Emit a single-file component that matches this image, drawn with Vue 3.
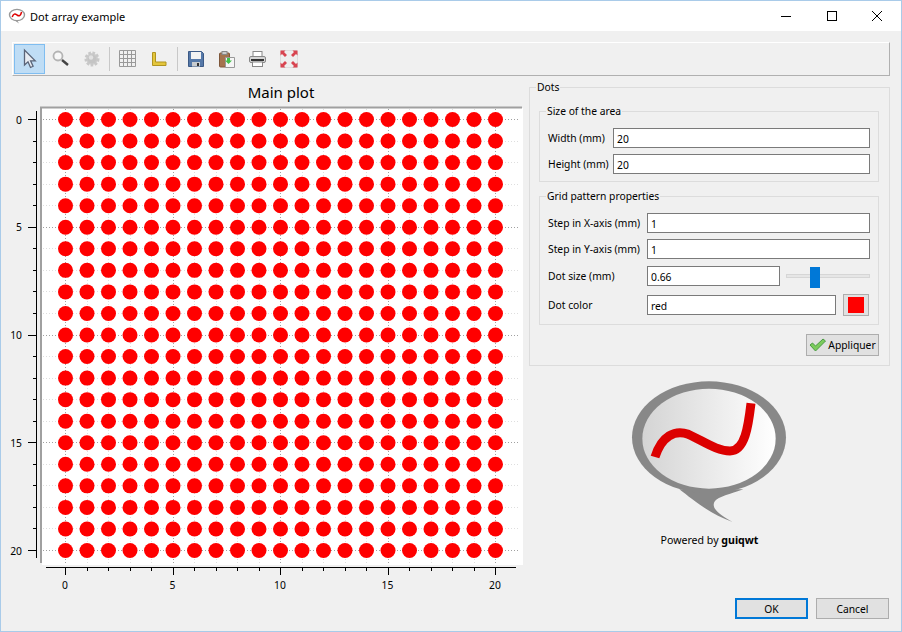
<script setup>
const steps = Array.from({ length: 21 }, (_, i) => i)
const xOf = i => 65.5 + 21.5 * i
const yOf = i => 119.5 + 21.55 * i
const majors = steps.filter(i => i % 5 === 0)
</script>

<template>
  <div class="window">
    <div class="titlebar">
      <svg class="app-icon" width="18" height="16" viewBox="0 0 18 16">
        <ellipse cx="9" cy="7" rx="7.5" ry="5.6" fill="#fff" stroke="#999" stroke-width="1.4" />
        <path d="M6 12l5 3.5-2-3.5z" fill="#999" />
        <path d="M4.2 9C5.5 5.500 7 5.500 9 7c2 1.300 3.500 1.200 4.600-3" fill="none" stroke="#d00" stroke-width="1.5" />
      </svg>
      <span class="title">Dot array example</span>
      <div class="winbtns">
        <span class="winbtn"><svg width="12" height="12"><path d="M1 6.5h10" stroke="#000" /></svg></span>
        <span class="winbtn"><svg width="12" height="12"><rect x="1.5" y="1.5" width="9" height="9" fill="none" stroke="#000" /></svg></span>
        <span class="winbtn"><svg width="12" height="12"><path d="M1 1l10 10M11 1L1 11" stroke="#000" /></svg></span>
      </div>
    </div>

    <div class="content">
      <div class="toolbar">
        <span class="tool active">
          <svg width="20" height="22" viewBox="0 0 20 22">
            <path d="M4.500 2v15l3.500-3.200 2.500 5.700 2.600-1.200-2.500-5.500h4.600z" fill="#e8ecf2" stroke="#5a6478" stroke-width="1.300" />
          </svg>
        </span>
        <span class="tool">
          <svg width="20" height="20" viewBox="0 0 20 20">
            <circle cx="7" cy="7" r="4.500" fill="#f8f8f8" stroke="#b4b4b4" stroke-width="1.800" />
            <path d="M11 11l6 5" stroke="#444" stroke-width="2.400" />
          </svg>
        </span>
        <span class="tool">
          <svg width="20" height="20" viewBox="0 0 20 20">
            <circle cx="10" cy="10" r="6" fill="#cfcfcf" stroke="#c8c8c8" stroke-width="3" stroke-dasharray="2.500 1.500" />
            <circle cx="10" cy="10" r="4.500" fill="#c4c4c4" />
            <circle cx="9" cy="8.500" r="2.200" fill="#e2e2e2" />
          </svg>
        </span>
        <span class="sep"></span>
        <span class="tool">
          <svg width="18" height="18" viewBox="0 0 18 18">
            <path d="M.5.500h16v16H.5zM4.500.500v16M8.500.500v16M12.500.500v16M.5 4.500h16M.5 8.500h16M.5 12.500h16" fill="none" stroke="#999" />
          </svg>
        </span>
        <span class="tool">
          <svg width="16" height="16" viewBox="0 0 16 16">
            <path d="M1.500 1.500h3v9.500h10.500v3.500H1.500z" fill="#e4c63c" stroke="#b09420" />
          </svg>
        </span>
        <span class="sep sep2"></span>
        <span class="tool">
          <svg width="16" height="16" viewBox="0 0 16 16">
            <path d="M.5.500h13l2 2v13H.5z" fill="#5578a8" stroke="#3c5a86" />
            <rect x="3" y="1" width="10" height="7" fill="#f2f2f2" />
            <rect x="4" y="11" width="8" height="4.500" fill="#c8ccd0" />
            <rect x="9" y="12" width="2" height="3" fill="#333" />
          </svg>
        </span>
        <span class="tool">
          <svg width="16" height="17" viewBox="0 0 16 17">
            <rect x=".5" y="2" width="10" height="14" rx="1" fill="#a5734e" stroke="#7e573a" />
            <rect x="3" y=".5" width="5" height="3" fill="#ccc" stroke="#888" />
            <path d="M6.500 6.500h9v10h-9z" fill="#f6f6f6" stroke="#999" />
            <path d="M8 7h3v2.500h2L9.500 13 6 9.500h2z" fill="#44c24a" />
          </svg>
        </span>
        <span class="tool">
          <svg width="17" height="16" viewBox="0 0 17 16">
            <rect x="4" y=".5" width="9" height="6" fill="#fff" stroke="#888" />
            <rect x=".5" y="5.500" width="16" height="6" rx="1.500" fill="#d6d6d6" stroke="#888" />
            <rect x="2" y="8" width="13" height="2" fill="#333" />
            <rect x="3.500" y="11" width="10" height="4.500" fill="#fff" stroke="#888" />
          </svg>
        </span>
        <span class="tool">
          <svg width="18" height="18" viewBox="0 0 18 18">
            <rect x=".5" y=".5" width="17" height="17" rx="1" fill="#eee" stroke="#ddd" />
            <g fill="#d84450">
              <path d="M.5.500h5l-1.500 1.500 3 3-2 2-3-3L.5 5.500z" />
              <path d="M17.500.500h-5l1.500 1.500-3 3 2 2 3-3 1.500 1.500z" />
              <path d="M.5 17.500h5L4 16l3-3-2-2-3 3-1.500-1.500z" />
              <path d="M17.500 17.500h-5l1.500-1.500-3-3 2-2 3 3 1.500-1.500z" />
            </g>
          </svg>
        </span>
      </div>

      <div class="main">
        <svg class="plot" width="528" height="515" viewBox="1 80 528 515">
          <text x="281" y="98" class="plot-title" text-anchor="middle">Main plot</text>
          <rect x="42" y="108" width="481" height="457" fill="#fff" />
          <path d="M41 563V107.500H522" fill="none" stroke="#a0a0a0" stroke-width="2" />

          <g v-for="i in steps" :key="'g' + i">
            <path
              :d="`M${Math.floor(xOf(i)) + 0.5} 109V563M43 ${Math.floor(yOf(i)) + 0.5}H520`"
              fill="none"
              :stroke="i % 5 === 0 ? '#a0a0a0' : '#dedede'"
              stroke-dasharray="1 2"
            />
          </g>
          <g v-for="r in steps" :key="'r' + r">
            <circle v-for="c in steps" :key="c" :cx="xOf(c)" :cy="yOf(r)" r="7.500" fill="#f00" />
          </g>

          <path d="M36.500 111V558M46 567.500H516" stroke="#000" fill="none" />
          <g v-for="i in steps" :key="'t' + i">
            <path
              :d="`M${i % 5 === 0 ? 28 : 33} ${Math.floor(yOf(i)) + 0.5}H36M${Math.floor(xOf(i)) + 0.5} 567V${i % 5 === 0 ? 575 : 571}`"
              stroke="#000"
              fill="none"
            />
          </g>
          <template v-for="i in majors" :key="'l' + i">
            <text :x="22" :y="yOf(i) + 4" class="tick" text-anchor="end">{{ i }}</text>
            <text :x="xOf(i) - 0.5" y="589" class="tick" text-anchor="middle">{{ i }}</text>
          </template>
        </svg>

        <div class="side">
          <div class="group outer">
            <span class="legend">Dots</span>
            <div class="group inner">
              <span class="legend">Size of the area</span>
              <div class="form size-form">
                <label>Width (mm)</label>
                <input value="20" />
                <label>Height (mm)</label>
                <input value="20" />
              </div>
            </div>
            <div class="group inner second">
              <span class="legend">Grid pattern properties</span>
              <div class="form grid-form">
                <label>Step in X-axis (mm)</label>
                <input value="1" />
                <label>Step in Y-axis (mm)</label>
                <input value="1" />
                <label class="row3">Dot size (mm)</label>
                <div class="size-row row3">
                  <input value="0.66" />
                  <div class="slider"><span class="handle"></span></div>
                </div>
                <label class="row4">Dot color</label>
                <div class="color-row row4">
                  <input value="red" />
                  <button class="btn swatch"><span></span></button>
                </div>
              </div>
            </div>
            <div class="apply-row">
              <button class="btn apply">
                <svg width="17" height="14" viewBox="0 0 17 14">
                  <path d="M1 7l2.500-2 3 3L14 1l2.500 2L6.500 13z" fill="#7ccb5c" stroke="#4a9a44" />
                </svg>
                Appliquer
              </button>
            </div>
          </div>

          <div class="logo">
            <svg width="180" height="150" viewBox="0 0 540 450">
              <defs>
                <linearGradient id="shine" x1="0" x2="1" y1="0" y2="0">
                  <stop offset="0" stop-color="#d4d4d4" />
                  <stop offset="1" stop-color="#fff" />
                </linearGradient>
              </defs>
              <path d="M178 340C215 368 270 415 338 438 300 418 270 395 285 375 295 362 330 355 370 340z" fill="#888" />
              <ellipse cx="267" cy="184" rx="231" ry="168" fill="#888" />
              <ellipse cx="267" cy="188" rx="200" ry="150" fill="url(#shine)" />
              <path d="M105 243C125 180 165 160 205 175 250 195 290 225 330 225 375 225 385 150 393 82" fill="none" stroke="#dc0000" stroke-width="27" />
            </svg>
            <p class="powered">Powered by <b>guiqwt</b></p>
          </div>
        </div>
      </div>

      <div class="footer">
        <button class="btn dialog default">OK</button>
        <button class="btn dialog">Cancel</button>
      </div>
    </div>
  </div>
</template>

<style>
html, body { margin: 0; background: #f0f0f0; }
</style>

<style scoped>
.window {
  box-sizing: border-box;
  width: 902px;
  height: 632px;
  border: 1px solid #a9cbe9;
  background: #f0f0f0;
  font-family: "Noto Sans", sans-serif;
  font-size: 10.3px;
  color: #000;
  overflow: hidden;
}
.titlebar {
  display: flex;
  align-items: center;
  height: 30px;
  background: #fff;
  padding-left: 7px;
}
.app-icon { margin-right: 4px; }
.title { font-size: 11px; flex: 1; }
.winbtns { display: flex; margin-right: 1px; }
.winbtn {
  width: 45.5px;
  height: 30px;
  display: flex;
  align-items: center;
  justify-content: center;
}
.winbtn svg { display: block; }

.content { padding: 11px 11px 0 11px; }
.toolbar {
  display: flex;
  align-items: center;
  box-sizing: border-box;
  height: 34px;
  width: 878px;
  padding-left: 1px;
  border-top: 1px solid #fff;
  border-left: 1px solid #fff;
  border-right: 1px solid #b0b0b0;
  border-bottom: 1px solid #b0b0b0;
}
.tool {
  box-sizing: border-box;
  width: 31px;
  height: 30px;
  display: flex;
  align-items: center;
  justify-content: center;
  border: 1px solid transparent;
}
.tool svg { display: block; }
.tool.active {
  background: #bfddf5;
  border-color: #7fbdf0;
}
.sep {
  width: 1px;
  height: 24px;
  background: #c8c8c8;
  margin: 0 2px 0 2px;
}
.sep2 { margin: 0 2px 0 3px; }

.main { display: flex; margin-top: 4px; margin-left: -11px; }
.plot { display: block; flex: none; }
.plot-title { font: 15px "Noto Sans", sans-serif; fill: #000; }
.tick { font: 10.3px "Noto Sans", sans-serif; fill: #000; }

.side { width: 361px; margin-top: 7px; }
.group {
  position: relative;
  box-sizing: border-box;
  border: 1px solid #dcdcdc;
}
.legend {
  position: absolute;
  left: 6px;
  top: -8px;
  padding: 0 1px;
  line-height: 15px;
  background: #f0f0f0;
}
.outer { height: 279px; padding: 23px 10px 0 9px; }
.inner { padding: 16px 8px 7px; }
.second { margin-top: 14px; padding: 16px 8px 8px; }
.form { display: grid; align-items: center; row-gap: 6px; }
.size-form { grid-template-columns: 65px 1fr; }
.grid-form { grid-template-columns: 99px 1fr; }
.row3 { margin-top: 1px; }
.row4 { margin-top: 2px; }

input {
  box-sizing: border-box;
  width: 100%;
  height: 20px;
  min-width: 0;
  border: 1px solid #7a7a7a;
  background: #fff;
  padding: 1px 3px 0;
  font: 10.3px "Noto Sans", sans-serif;
  color: #000;
  outline: none;
}
.size-row, .color-row { display: flex; align-items: center; }
.size-row input { width: 133px; flex: none; }
.slider {
  position: relative;
  flex: 1;
  margin-left: 6px;
  height: 4px;
  background: #e6e6e6;
  border: 1px solid #d6d6d6;
  box-sizing: border-box;
}
.handle {
  position: absolute;
  left: 23px;
  top: -8px;
  width: 10px;
  height: 21px;
  background: #0078d7;
}
.color-row input { width: 189px; flex: none; }
.btn {
  box-sizing: border-box;
  border: 1px solid #adadad;
  background: #e1e1e1;
  font: 10.3px "Noto Sans", sans-serif;
  color: #000;
  padding: 0;
}
.swatch {
  width: 26px;
  height: 22px;
  margin-left: 7px;
  display: flex;
  align-items: center;
  justify-content: center;
}
.swatch span { width: 16px; height: 16px; background: #f00; display: block; }
.apply-row { display: flex; justify-content: flex-end; margin-top: 9px; }
.apply {
  width: 73px;
  height: 22px;
  display: flex;
  align-items: center;
  justify-content: center;
  gap: 2px;
}
.logo {
  display: flex;
  flex-direction: column;
  align-items: center;
  margin-top: 10px;
}
.logo svg { display: block; }
.powered { margin: 7px 0 0 0; line-height: 15px; font-size: 10.6px; }
.footer {
  display: flex;
  justify-content: flex-end;
  gap: 8px;
  width: 877px;
  margin-top: 3px;
}
.dialog { width: 73px; height: 21px; }
.default { border: 2px solid #0078d7; }
</style>
